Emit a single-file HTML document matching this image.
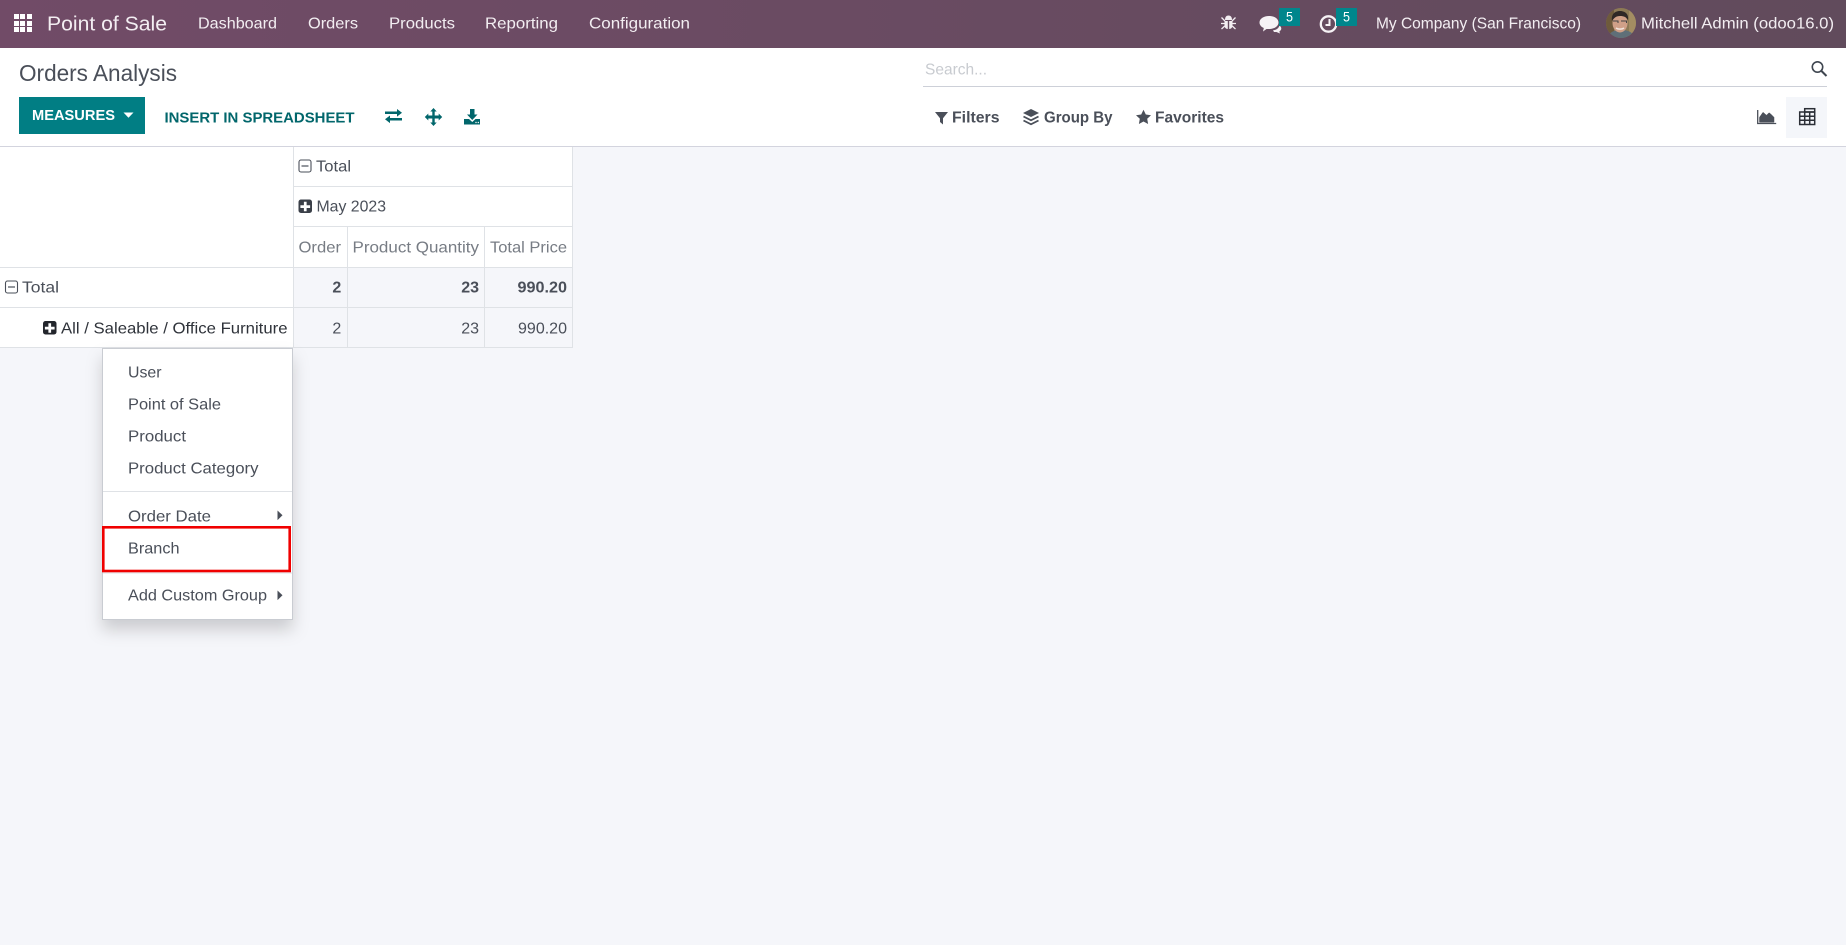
<!DOCTYPE html>
<html lang="en"><head><meta charset="utf-8"><title>Orders Analysis</title>
<style>
html,body{margin:0;padding:0;width:1846px;height:945px;overflow:hidden;background:#f5f6fa}
svg{display:block;position:absolute;left:0;top:0}
text{font-family:"Liberation Sans",sans-serif;font-size:16px;fill:#4a4f59}
.n{fill:#f3eef2}
.b{font-weight:bold}
.h{fill:#777c84}
.t{fill:#01666b;font-weight:bold}
</style></head><body>
<svg width="1846" height="945" viewBox="0 0 1846 945" xmlns="http://www.w3.org/2000/svg">
<defs>
<linearGradient id="nav" x1="0" x2="1" y1="0" y2="0"><stop offset="0" stop-color="#714b67"/><stop offset="1" stop-color="#614b5c"/></linearGradient>
<filter id="sh" x="-30%" y="-20%" width="160%" height="140%"><feDropShadow dx="0" dy="10" stdDeviation="8" flood-color="#000" flood-opacity=".17"/></filter>
<clipPath id="av"><circle cx="1621" cy="23" r="15"/></clipPath>
</defs>
<rect width="1846" height="945" fill="#f5f6fa"/>
<!-- navbar -->
<rect width="1846" height="48" fill="url(#nav)"/>
<g fill="#fff"><rect x="14" y="14" width="5" height="5"/><rect x="20" y="14" width="5" height="5"/><rect x="27" y="14" width="5" height="5"/><rect x="14" y="21" width="5" height="5"/><rect x="20" y="21" width="5" height="5"/><rect x="27" y="21" width="5" height="5"/><rect x="14" y="27" width="5" height="5"/><rect x="20" y="27" width="5" height="5"/><rect x="27" y="27" width="5" height="5"/></g>
<text class="n" x="47" y="30.500" style="font-size:20px" textLength="120" lengthAdjust="spacingAndGlyphs">Point of Sale</text>
<text class="n" x="198" y="28.500" textLength="79" lengthAdjust="spacingAndGlyphs">Dashboard</text>
<text class="n" x="308" y="28.500" textLength="50" lengthAdjust="spacingAndGlyphs">Orders</text>
<text class="n" x="389" y="28.500" textLength="66" lengthAdjust="spacingAndGlyphs">Products</text>
<text class="n" x="485" y="28.500" textLength="73" lengthAdjust="spacingAndGlyphs">Reporting</text>
<text class="n" x="589" y="28.500" textLength="101" lengthAdjust="spacingAndGlyphs">Configuration</text>
<!-- bug -->
<g fill="#f3eef2"><path d="M1225 20c0-3 1.300-4.500 3.500-4.500s3.500 1.500 3.500 4.500z"/><path d="M1224.500 21h3.300v8c-2 0-3.300-1.500-3.300-4zM1229.200 21h3.300v4c0 2.500-1.300 4-3.300 4z"/><path d="M1221.500 17.500l3.500 3.500M1235.500 17.500l-3.500 3.500M1221 23.500h3.500M1236 23.500h-3.500M1221.500 29l3.300-3M1235.500 29l-3.300-3" stroke="#f3eef2" stroke-width="1.300" fill="none"/></g>
<!-- comments -->
<path d="M1269 16c5.500 0 9.500 2.800 9.500 6.500s-4 6.500-9.500 6.500h-2.500l-3.500 2.500.8-3.500c-2.800-1.200-4.300-3.200-4.300-5.500 0-3.700 4-6.500 9.500-6.500z" fill="#f6f2f5"/>
<path d="M1279.500 25.500c1.200 1 1.800 2 1.800 3 0 1.200-.8 2.200-2 3l.7 2-3.500-1.500h-2.500l-1-1.800c3 0 5.800-1.900 6.500-4.700z" fill="#f6f2f5"/>
<rect x="1279" y="8" width="21" height="18" fill="#00868c"/>
<text x="1286" y="21.500" style="font-size:13.500px;fill:#fff" textLength="7" lengthAdjust="spacingAndGlyphs">5</text>
<!-- clock -->
<circle cx="1328.500" cy="24" r="7.700" fill="none" stroke="#f6f2f5" stroke-width="2.300"/>
<path d="M1329.500 19v6h-4" fill="none" stroke="#f6f2f5" stroke-width="2"/>
<rect x="1336" y="8" width="21" height="18" fill="#00868c"/>
<text x="1343" y="21.500" style="font-size:13.500px;fill:#fff" textLength="7" lengthAdjust="spacingAndGlyphs">5</text>
<text class="n" x="1376" y="28.500" textLength="205" lengthAdjust="spacingAndGlyphs">My Company (San Francisco)</text>
<!-- avatar -->
<g clip-path="url(#av)"><rect x="1606" y="8" width="30" height="30" fill="#8d7a55"/>
<rect x="1606" y="8" width="8" height="30" fill="#6e5a3c"/><rect x="1629" y="8" width="7" height="30" fill="#a38d62"/>
<path d="M1608 38c1-6 6-8 13-8s12 2 14 8z" fill="#5f6f78"/>
<ellipse cx="1620" cy="23" rx="7.500" ry="9.500" fill="#d0a088"/>
<path d="M1612 21c-1-7 3-10 8-10s9 3 8 9c-2-3-4-4-8-4s-6 2-8 5z" fill="#2f2826"/>
<path d="M1613 21h5v2M1621 21h5.500v2" fill="none" stroke="#444" stroke-width="1"/>
<path d="M1616 28c2 1.500 6 1.500 8 0" stroke="#f2e6df" stroke-width="1.500" fill="none"/></g>
<text class="n" x="1641" y="28.500" textLength="193" lengthAdjust="spacingAndGlyphs">Mitchell Admin (odoo16.0)</text>
<!-- control panel -->
<rect y="48" width="1846" height="98" fill="#fff"/>
<rect y="146" width="1846" height="1" fill="#d3d4de"/>
<text x="19" y="81" style="font-size:23px" textLength="158" lengthAdjust="spacingAndGlyphs">Orders Analysis</text>
<rect x="19" y="97" width="126" height="37" fill="#017e84"/>
<text x="32" y="120" class="b" style="fill:#fff;font-size:15px" textLength="83" lengthAdjust="spacingAndGlyphs">MEASURES</text>
<path d="M123.500 112.500h10l-5 5.300z" fill="#fff"/>
<text x="164.500" y="122.500" class="t" style="font-size:15px" textLength="190" lengthAdjust="spacingAndGlyphs">INSERT IN SPREADSHEET</text>
<g fill="#01666b">
<path d="M385 113h12v-2.500l5 3.800-5 3.800v-2.600h-12zM402 119.500h-12V117l-5 3.800 5 3.800V122h12z" transform="translate(0,-1.500)"/>
<path d="M433.500 108l3.200 3.500h-2v4h4v-2l3.500 3.500-3.500 3.500v-2h-4v4h2l-3.200 3.500-3.200-3.500h2v-4h-4v2l-3.500-3.500 3.500-3.500v2h4v-4h-2z"/>
<path d="M470 109h4.500v5.500h3l-5.250 5.500-5.250-5.500h3zM464 119h5l3.250 3 3.250-3h4.500v5.500h-16z"/>
</g>
<circle cx="476" cy="122.500" r=".7" fill="#fff"/><circle cx="478.300" cy="122.500" r=".7" fill="#fff"/>
<!-- search -->
<text x="925" y="74.500" style="font-size:16px;fill:#c8cbd0" textLength="62" lengthAdjust="spacingAndGlyphs">Search...</text>
<rect x="923" y="86" width="904" height="1" fill="#cdd0d8"/>
<circle cx="1817.500" cy="67" r="5.200" fill="none" stroke="#3f4650" stroke-width="1.600"/><path d="M1821.500 71l5 5" stroke="#3f4650" stroke-width="2"/>
<path d="M935 112h13l-5 6.300v6.200l-3-2.500v-3.700z" fill="#4a4f59"/>
<text x="952" y="122.500" class="b" textLength="47.500" lengthAdjust="spacingAndGlyphs">Filters</text>
<path d="M1031 109l8 4-8 4-8-4z" fill="#4a4f59"/><path d="M1023.500 116.500l7.500 3.800 7.500-3.800M1023.500 120.500l7.500 3.800 7.500-3.800" fill="none" stroke="#4a4f59" stroke-width="1.800"/>
<text x="1044" y="122.500" class="b" textLength="68.500" lengthAdjust="spacingAndGlyphs">Group By</text>
<path d="M1143.500 109.800l2.300 4.700 5.200.7-3.800 3.600.9 5.200-4.600-2.500-4.600 2.500.9-5.200-3.800-3.600 5.200-.7z" fill="#4a4f59"/>
<text x="1155" y="122.500" class="b" textLength="69" lengthAdjust="spacingAndGlyphs">Favorites</text>
<!-- view switch -->
<path d="M1757.700 110v13.500h18.500" fill="none" stroke="#4a4f59" stroke-width="1.300"/>
<path d="M1759.500 122.300v-5l3.500-5 3.500 3 2.500-2.500 1.500 1 3.500 3.500v5z" fill="#4a4f59" stroke="#4a4f59" stroke-width=".5"/>
<rect x="1786" y="97" width="41" height="41" fill="#f4f6fa"/>
<g fill="none" stroke="#2b2f36" stroke-width="1.500"><rect x="1799.700" y="112" width="15" height="12.500"/><rect x="1804.700" y="108.700" width="10" height="3.300"/><path d="M1804.700 112v12.500M1809.700 112v12.500M1799.700 116.200h15M1799.700 120.300h15"/></g>
<!-- pivot table -->
<g fill="#fff"><rect x="0" y="147" width="293" height="200"/><rect x="293" y="147" width="280" height="120"/></g>
<g fill="#dfe2e6">
<rect x="293" y="147" width="1" height="200"/><rect x="572" y="147" width="1" height="200"/>
<rect x="293" y="186" width="280" height="1"/><rect x="293" y="226" width="280" height="1"/>
<rect x="0" y="267" width="573" height="1"/><rect x="0" y="307" width="573" height="1"/><rect x="0" y="347" width="573" height="1"/>
<rect x="347" y="227" width="1" height="120"/><rect x="484" y="227" width="1" height="120"/>
</g>
<rect x="299" y="160" width="12" height="12" rx="2" fill="none" stroke="#4a4f59" stroke-width="1.100"/><rect x="301.500" y="165.400" width="7" height="1.200" fill="#4a4f59"/>
<text x="316" y="171.500" textLength="35" lengthAdjust="spacingAndGlyphs">Total</text>
<rect x="298.500" y="199.500" width="13.500" height="13.500" rx="2.500" fill="#3a3f48"/><path d="M303.900 201.800h2.700v3.500h3.500v2.700h-3.500v3.300h-2.700V208h-3.500v-2.700h3.500z" fill="#fff"/>
<text x="316.500" y="211.500" textLength="69.500" lengthAdjust="spacingAndGlyphs">May 2023</text>
<text class="h" x="298.500" y="252.500" textLength="42.500" lengthAdjust="spacingAndGlyphs">Order</text>
<text class="h" x="352.500" y="252.500" textLength="126.500" lengthAdjust="spacingAndGlyphs">Product Quantity</text>
<text class="h" x="490" y="252.500" textLength="77" lengthAdjust="spacingAndGlyphs">Total Price</text>
<rect x="5.500" y="281" width="12" height="12" rx="2" fill="none" stroke="#4a4f59" stroke-width="1.100"/><rect x="8" y="286.400" width="7" height="1.200" fill="#4a4f59"/>
<text x="22" y="292.500" textLength="37" lengthAdjust="spacingAndGlyphs">Total</text>
<rect x="43" y="321" width="13.500" height="13.500" rx="2.500" fill="#23262c"/><path d="M48.400 323.300h2.700v3.500h3.500v2.700h-3.500v3.300h-2.700v-3.300h-3.500v-2.700h3.500z" fill="#fff"/>
<text x="61" y="333.500" style="fill:#2f333a" textLength="226.500" lengthAdjust="spacingAndGlyphs">All / Saleable / Office Furniture</text>
<text class="b" x="341.300" y="292.500" text-anchor="end">2</text>
<text class="b" x="479" y="292.500" text-anchor="end">23</text>
<text class="b" x="517.500" y="292.500" textLength="49.500" lengthAdjust="spacingAndGlyphs">990.20</text>
<text x="341.300" y="333.500" text-anchor="end">2</text>
<text x="479" y="333.500" text-anchor="end">23</text>
<text x="518" y="333.500" textLength="49" lengthAdjust="spacingAndGlyphs">990.20</text>
<!-- dropdown -->
<rect x="102.500" y="348.500" width="190" height="271" fill="#fff" stroke="#c9ccd2" filter="url(#sh)"/>
<text x="128" y="377.500" textLength="33.500" lengthAdjust="spacingAndGlyphs">User</text>
<text x="128" y="409.500" textLength="93" lengthAdjust="spacingAndGlyphs">Point of Sale</text>
<text x="128" y="441.500" textLength="58" lengthAdjust="spacingAndGlyphs">Product</text>
<text x="128" y="473.500" textLength="130.500" lengthAdjust="spacingAndGlyphs">Product Category</text>
<rect x="103" y="491" width="189" height="1" fill="#dfe2e6"/>
<text x="128" y="521.500" textLength="83" lengthAdjust="spacingAndGlyphs">Order Date</text>
<path d="M277.500 510.500l5 4.800-5 4.800z" fill="#4a4f59"/>
<text x="128" y="553.500" textLength="51.500" lengthAdjust="spacingAndGlyphs">Branch</text>
<rect x="103.300" y="527.300" width="186.400" height="43.700" fill="none" stroke="#f00000" stroke-width="2.600"/>
<rect x="103" y="572.500" width="189" height="1" fill="#dfe2e6"/>
<text x="128" y="600.500" textLength="139" lengthAdjust="spacingAndGlyphs">Add Custom Group</text>
<path d="M277.500 590.500l5 4.800-5 4.800z" fill="#4a4f59"/>
</svg>
</body></html>
